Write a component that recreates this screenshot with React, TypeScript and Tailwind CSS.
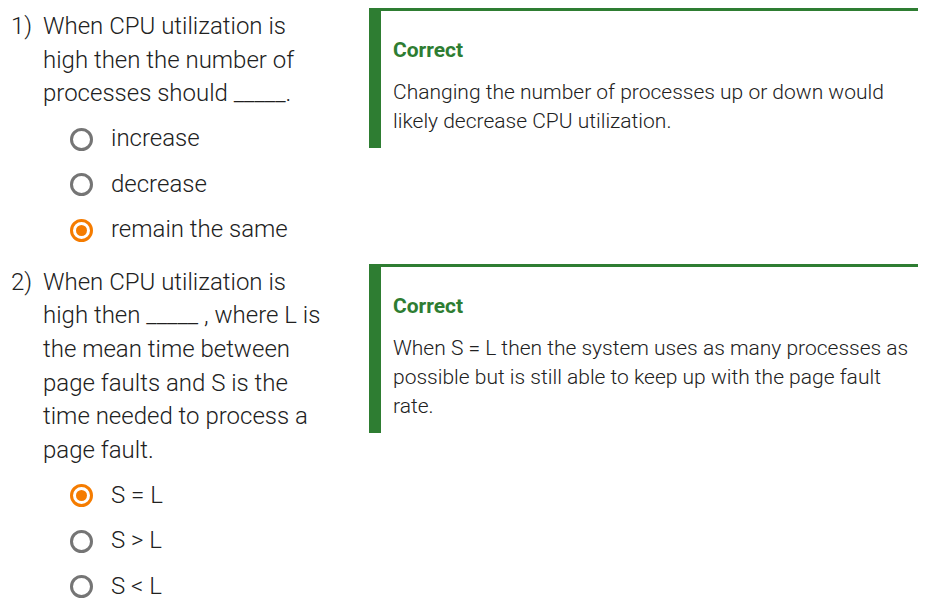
import React from "react";

type Question = {
  num: string;
  text: React.ReactNode;
  options: string[];
  selected: number;
  feedback: string;
};

const QUESTIONS: Question[] = [
  {
    num: "1)",
    text: (
      <>
        When CPU utilization is high then the number of processes should _____.
      </>
    ),
    options: ["increase", "decrease", "remain the same"],
    selected: 2,
    feedback: "Changing the number of processes up or down would likely decrease CPU utilization.",
  },
  {
    num: "2)",
    text: (
      <>
        When CPU utilization is high then _____ , where L is the mean time between page faults and S is the
        time needed to process a page fault.
      </>
    ),
    options: ["S = L", "S > L", "S < L"],
    selected: 0,
    feedback:
      "When S = L then the system uses as many processes as possible but is still able to keep up with the page fault rate.",
  },
];

function Radio({ checked }: { checked: boolean }) {
  if (checked) {
    return (
      <span className="w-[23px] h-[23px] rounded-full border-[3px] border-[#f57c00] flex items-center justify-center shrink-0">
        <span className="w-[11px] h-[11px] rounded-full bg-[#f57c00]" />
      </span>
    );
  }
  return <span className="w-[23px] h-[23px] rounded-full border-[3px] border-[#757575] shrink-0" />;
}

function QuestionRow({ q }: { q: Question }) {
  return (
    <div className="flex items-start">
      <div className="w-[369px] shrink-0 flex pt-[2px]">
        <div className="w-[43px] pl-[11px] shrink-0">{q.num}</div>
        <div className="w-[288px]">
          <div>{q.text}</div>
          <div className="mt-[5.6px]">
            {q.options.map((opt, i) => (
              <div key={opt} className="h-[45.5px] flex items-center pl-[27px] gap-[18px]">
                <Radio checked={i === q.selected} />
                <span>{opt}</span>
              </div>
            ))}
          </div>
        </div>
      </div>
      <div className="w-[549px] border-l-[12px] border-t-[3px] border-[#2e7d32] pl-[12px] pr-0 pt-[25px] pb-[12px] text-[21px] leading-[29px]">
        <div className="font-bold text-[#2e7d32]">Correct</div>
        <div className="mt-[13px]">{q.feedback}</div>
      </div>
    </div>
  );
}

export default function App() {
  return (
    <div
      className="min-h-screen bg-white pt-[8px] text-[24px] leading-[33.6px] font-light text-[#212121] flex flex-col gap-[11px]"
      style={{ fontFamily: "Roboto, 'Liberation Sans', sans-serif" }}
    >
      {QUESTIONS.map((q) => (
        <QuestionRow key={q.num} q={q} />
      ))}
    </div>
  );
}
